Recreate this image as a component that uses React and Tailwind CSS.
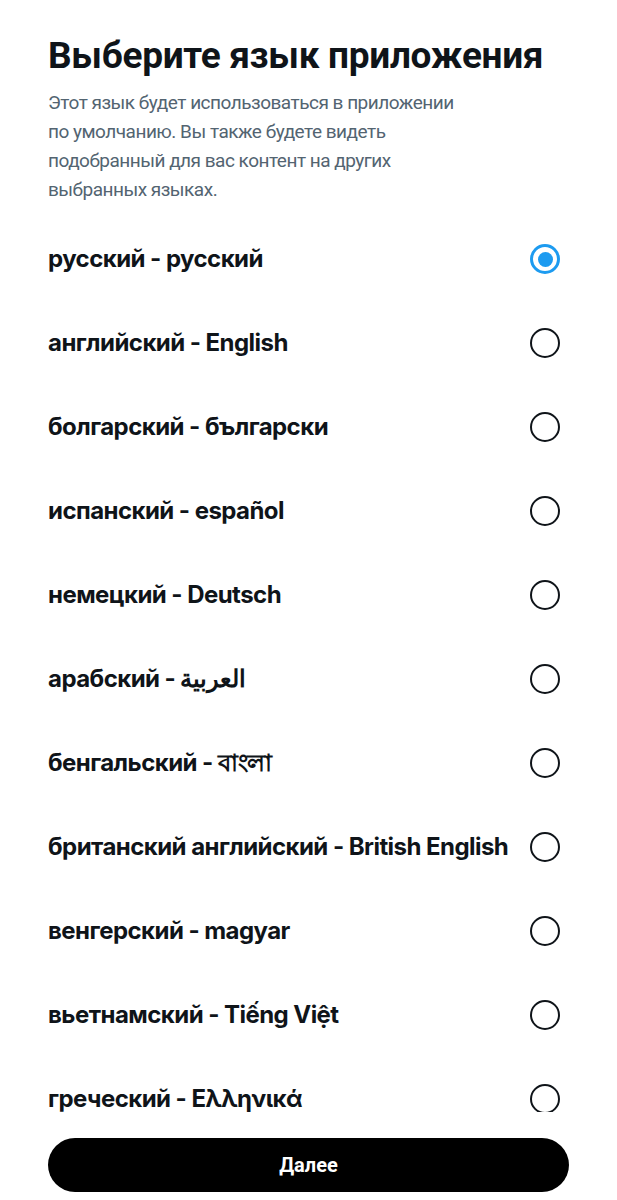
import React, { useState } from 'react';

const languages = [
  'русский - русский',
  'английский - English',
  'болгарский - български',
  'испанский - español',
  'немецкий - Deutsch',
  'арабский - العربية',
  'бенгальский - বাংলা',
  'британский английский - British English',
  'венгерский - magyar',
  'вьетнамский - Tiếng Việt',
  'греческий - Ελληνικά',
];

function Radio({ checked }) {
  if (checked) {
    return (
      <div className="w-[30px] h-[30px] rounded-full border-[3px] border-[#1d9bf0] flex items-center justify-center shrink-0">
        <div className="w-[15px] h-[15px] rounded-full bg-[#1d9bf0]" />
      </div>
    );
  }
  return <div className="w-[30px] h-[30px] rounded-full border-[2.5px] border-[#0f1419] shrink-0" />;
}

export default function App() {
  const [selected, setSelected] = useState(0);

  return (
    <div className="h-[1200px] w-full bg-white flex flex-col font-['Roboto',sans-serif] text-[#0f1419]">
      <div className="px-12 pt-[34px]">
        <h1 className="text-[37px] leading-[44px] font-bold tracking-[-0.3px]">Выберите язык приложения</h1>
        <p className="mt-[10px] max-w-[420px] text-[19px] leading-[29px] tracking-[-0.5px] text-[#536471]">
          Этот язык будет использоваться в приложении по умолчанию. Вы также будете видеть подобранный для вас контент на других выбранных языках.
        </p>
      </div>

      <div className="flex-1 overflow-hidden mt-[13px]">
        {languages.map((lang, i) => (
          <button
            key={lang}
            onClick={() => setSelected(i)}
            className="w-full h-[84px] flex items-center justify-between pl-12 pr-[57px] text-left"
          >
            <span className="text-[24px] font-bold font-['Inter',sans-serif] tracking-[-0.55px]">{lang}</span>
            <Radio checked={selected === i} />
          </button>
        ))}
      </div>

      <div className="px-12 pt-[26px] pb-[8px]">
        <button className="w-full h-[54px] rounded-full bg-black text-white text-[20px] font-bold">Далее</button>
      </div>
    </div>
  );
}
